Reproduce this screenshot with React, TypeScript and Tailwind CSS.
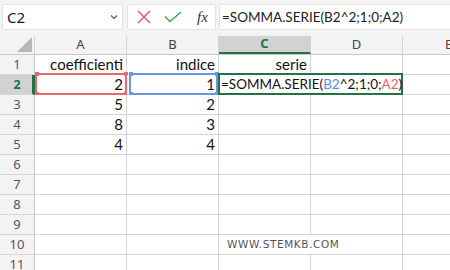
import React from 'react';

const cols = ['A', 'B', 'C', 'D', 'E'];

const rows: { a?: string; b?: string; c?: string }[] = [
  { a: 'coefficienti', b: 'indice', c: 'serie' },
  { a: '2', b: '1' },
  { a: '5', b: '2' },
  { a: '8', b: '3' },
  { a: '4', b: '4' },
  {}, {}, {}, {}, {}, {},
];

const cellFont = { fontFamily: 'Lato, "Liberation Sans", sans-serif' };
const uiFont = { fontFamily: '"Noto Sans", "Open Sans", sans-serif' };

function Handles({ color }: { color: string }) {
  return (
    <>
      <span className={`absolute -left-[2px] -top-[3px] w-[4px] h-[4px] ${color}`} />
      <span className={`absolute -right-[3px] -top-[3px] w-[4px] h-[4px] ${color}`} />
      <span className={`absolute -left-[2px] -bottom-[3px] w-[4px] h-[4px] ${color}`} />
      <span className={`absolute -right-[3px] -bottom-[3px] w-[4px] h-[4px] ${color}`} />
    </>
  );
}

function Formula() {
  return (
    <>
      =SOMMA.SERIE(<span className="text-[#5b8de8]">B2</span>^2;1;0;<span className="text-[#e36464]">A2</span>)
    </>
  );
}

export default function App() {
  return (
    <div className="w-[450px] h-[270px] overflow-hidden bg-[#f3f3f3] text-[#111]">
      {/* Formula bar */}
      <div className="flex h-[36px] pt-[4px] pl-[2px]" style={uiFont}>
        <div className="w-[121px] h-[26px] bg-white border border-[#e3e3e3] rounded-[2px] flex items-center justify-between pl-[4px] pr-[4px] text-[15px] text-[#222]">
          <span>C2</span>
          <svg width="8" height="6" viewBox="0 0 8 6">
            <path d="M1 1.5 L4 4.5 L7 1.5" fill="none" stroke="#555" strokeWidth="1.1" />
          </svg>
        </div>
        <div className="ml-[4px] w-[89px] h-[26px] bg-white border border-[#e3e3e3] rounded-[2px] flex items-center">
          <svg width="14" height="14" viewBox="0 0 14 14" className="ml-[9px]">
            <path d="M1 1 L13 13 M13 1 L1 13" stroke="#ee4b4f" strokeWidth="1.3" fill="none" />
          </svg>
          <svg width="18" height="12" viewBox="0 0 18 12" className="ml-[13px]">
            <path d="M1 5.5 L6 10.5 L17 1" stroke="#3ca651" strokeWidth="1.4" fill="none" />
          </svg>
          <span className="ml-[15px] italic text-[15px] text-[#333]" style={{ fontFamily: '"Liberation Serif", serif' }}>
            fx
          </span>
        </div>
        <div className="ml-[3px] flex-1 h-[26px] bg-white border border-r-0 border-[#e3e3e3] rounded-l-[2px] flex items-center pl-[2px] text-[13.5px] text-[#222] whitespace-nowrap" style={cellFont}>
          =SOMMA.SERIE(B2^2;1;0;A2)
        </div>
      </div>

      {/* Column headers */}
      <div className="flex h-[19px] border-b border-[#c8c8c8]" style={uiFont}>
        <div className="w-[35px] shrink-0 border-r border-[#d4d4d4] relative">
          <svg width="16" height="16" viewBox="0 0 16 16" className="absolute left-[17px] top-[1px]">
            <polygon points="15,0 15,15 0,15" fill="#b7b7b7" />
          </svg>
        </div>
        {cols.map((c) =>
          c === 'C' ? (
            <div
              key={c}
              className="w-[92px] shrink-0 bg-[#d2d2d2] border-r border-[#d4d4d4] border-b-[2px] border-b-[#217346] flex items-center justify-center text-[13px] font-bold text-[#217346]"
            >
              {c}
            </div>
          ) : (
            <div
              key={c}
              className="w-[92px] shrink-0 border-r border-[#d4d4d4] flex items-center justify-center text-[13px] text-[#444]"
            >
              {c}
            </div>
          )
        )}
      </div>

      {/* Rows */}
      {rows.map((r, i) => {
        const n = i + 1;
        const sel = n === 2;
        return (
          <div key={n} className="flex h-[20px]">
            <div
              className={
                sel
                  ? 'w-[35px] shrink-0 bg-[#d2d2d2] border-b border-[#d4d4d4] border-r-[3px] border-r-[#217346] flex items-center justify-center pl-[2px] text-[13px] font-bold text-[#217346]'
                  : 'w-[35px] shrink-0 border-b border-[#d4d4d4] border-r border-r-[#c8c8c8] flex items-center justify-center text-[13px] text-[#555]'
              }
              style={uiFont}
            >
              {n}
            </div>
            <div
              className={`w-[92px] shrink-0 bg-white border-r border-b border-[#d4d4d4] flex items-end justify-end pr-[3px] text-[15px] leading-[19px] relative ${sel ? 'bg-[#fdeeee]' : ''}`}
              style={cellFont}
            >
              {sel && (
                <div className="absolute left-0 -top-[2px] -right-[1px] -bottom-[1px] border-2 border-[#e56a6a]">
                  <Handles color="bg-[#e56a6a]" />
                </div>
              )}
              <span className="relative">{r.a}</span>
            </div>
            <div
              className={`w-[92px] shrink-0 bg-white border-r border-b border-[#d4d4d4] flex items-end justify-end pr-[3px] text-[15px] leading-[19px] relative ${sel ? 'bg-[#eef2fc]' : ''}`}
              style={cellFont}
            >
              {sel && (
                <div className="absolute left-[2px] -top-[2px] right-0 -bottom-[1px] border-2 border-[#6b94e4]">
                  <Handles color="bg-[#6b94e4]" />
                </div>
              )}
              <span className="relative">{r.b}</span>
            </div>
            <div
              className="w-[92px] shrink-0 bg-white border-r border-b border-[#d4d4d4] flex items-end justify-end pr-[3px] text-[15px] leading-[19px] relative"
              style={cellFont}
            >
              {sel && (
                <div className="absolute -left-[1px] -top-[2px] w-[185px] h-[22px] border-2 border-[#217346] bg-white z-10 flex items-center pl-[1px] whitespace-nowrap text-[13.5px]">
                  <Formula />
                </div>
              )}
              {n === 10 && (
                <div
                  className="absolute left-[8px] top-0 h-[19px] w-[120px] bg-white z-10 flex items-center text-[10.5px] tracking-[0.6px] text-[#555] whitespace-nowrap"
                  style={{ fontFamily: '"DejaVu Sans", sans-serif' }}
                >
                  WWW.STEMKB.COM
                </div>
              )}
              {r.c}
            </div>
            <div className="w-[92px] shrink-0 bg-white border-r border-b border-[#d4d4d4]" />
            <div className="w-[92px] shrink-0 bg-white border-r border-b border-[#d4d4d4]" />
          </div>
        );
      })}
    </div>
  );
}
